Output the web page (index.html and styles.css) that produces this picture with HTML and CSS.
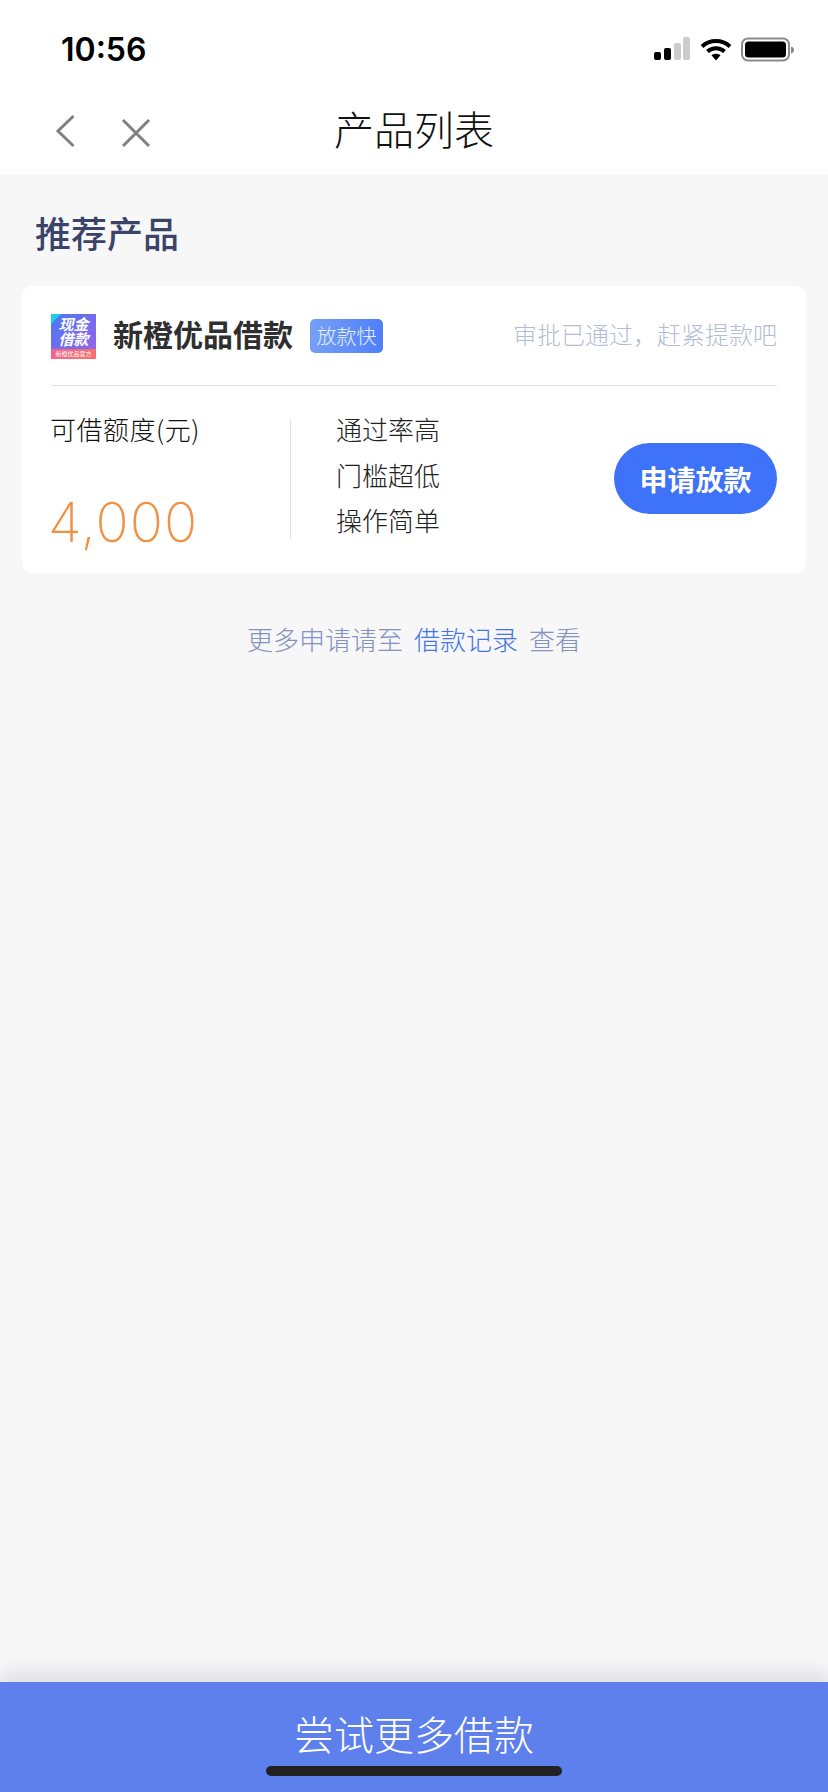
FILE: index.html
```html
<!DOCTYPE html>
<html lang="zh-CN">
<head>
<meta charset="utf-8">
<title>产品列表</title>
<link rel="stylesheet" href="styles.css">
</head>
<body>
<div class="app">
  <header class="top">
    <div class="status">
      <span class="time">10:56</span>
      <div class="status-icons">
        <svg class="signal" width="37" height="24" viewBox="0 0 37 24"><rect x="1" y="15" width="7" height="8" rx="2" fill="#000"/><rect x="11" y="11" width="7" height="12" rx="2" fill="#000"/><rect x="21" y="6" width="7" height="17" rx="2" fill="#ccc"/><rect x="30" y="0" width="7" height="23" rx="2" fill="#ccc"/></svg>
        <svg class="wifi" width="32" height="24" viewBox="0 0 32 24"><path d="M2 8.500C10 1.200 22 1.200 30 8.500M7.500 13.500C12.500 9.200 19.500 9.200 24.500 13.500" fill="none" stroke="#000" stroke-width="4"/><path d="M11.500 17.200C14.200 15.200 17.800 15.200 20.500 17.200L16 22.500Z" fill="#000"/></svg>
        <svg class="battery" width="54" height="26" viewBox="0 0 54 26"><rect x="1" y="1.500" width="47" height="22" rx="6" fill="none" stroke="#8a8a8a" stroke-width="2"/><rect x="4" y="4.500" width="41" height="16" rx="3.500" fill="#000"/><path d="M50 9.500C52 10 53 11 53 13C53 15 52 16 50 16.500Z" fill="#8a8a8a"/></svg>
      </div>
    </div>
    <nav class="nav">
      <svg class="nav-icon back" width="24" height="36" viewBox="0 0 24 36"><path d="M19.500 3L4 18L19.500 33" fill="none" stroke="#808080" stroke-width="3"/></svg>
      <svg class="nav-icon close" width="30" height="30" viewBox="0 0 30 30"><path d="M2 2L28 28M28 2L2 28" fill="none" stroke="#808080" stroke-width="3"/></svg>
      <h1 class="nav-title">产品列表</h1>
    </nav>
  </header>

  <main class="content">
    <h2 class="section-title">推荐产品</h2>
    <section class="card">
      <div class="card-head">
        <div class="logo">
          <span class="logo-badge"></span>
          <span class="logo-text">现金<br>借款</span>
          <span class="logo-foot">新橙优品官方</span>
        </div>
        <span class="product-name">新橙优品借款</span>
        <span class="tag">放款快</span>
        <span class="approved">审批已通过，赶紧提款吧</span>
      </div>
      <div class="card-body">
        <div class="quota">
          <div class="quota-label">可借额度(元)</div>
          <div class="quota-value">4,000</div>
        </div>
        <ul class="features">
          <li>通过率高</li>
          <li>门槛超低</li>
          <li>操作简单</li>
        </ul>
        <button class="apply">申请放款</button>
      </div>
    </section>
    <p class="more"><span>更多申请请至</span><a class="more-link">借款记录</a><span>查看</span></p>
  </main>

  <footer class="footer">
    <span class="footer-text">尝试更多借款</span>
    <span class="home-bar"></span>
  </footer>
</div>
</body>
</html>
```
FILE: styles.css
```css
* { box-sizing: border-box; margin: 0; padding: 0; }
html, body { width: 828px; height: 1792px; overflow: hidden; }
body { font-family: "Noto Sans CJK SC", "Liberation Sans", sans-serif; background: #f7f7f8; color: #222; }
.app { display: flex; flex-direction: column; height: 1792px; }

.top { background: #fff; height: 174px; flex: none; }
.status { height: 88px; display: flex; align-items: center; justify-content: space-between; padding: 0 33px 0 61px; }
.time { font-family: Inter, "Liberation Sans", sans-serif; font-size: 32px; font-weight: 600; color: #000; line-height: 1; padding-top: 11px; }
.status-icons { display: flex; align-items: center; gap: 9px; padding-top: 11px; }
.signal { margin-top: -1px; margin-right: 1px; }

.nav { height: 86px; display: flex; align-items: center; position: relative; padding-left: 54px; }
.nav-icon { flex: none; }
.close { margin-left: 43px; margin-top: 3px; }
.back { margin-top: 0; }
.nav-title { position: absolute; left: 0; right: 0; top: 13px; text-align: center; font-size: 40px; font-weight: 300; line-height: 54px; color: #111; }

.content { flex: 1; padding: 0 22px; }
.section-title { font-size: 36px; font-weight: 500; color: #3a4468; line-height: 50px; padding: 33px 0 0 13px; margin-bottom: 29px; }

.card { background: #fff; border-radius: 10px; height: 287px; padding: 0 29px; }
.card-head { display: flex; align-items: center; height: 100px; border-bottom: 1px solid #dde3e8; }
.logo { width: 45px; height: 45px; flex: none; position: relative; overflow: hidden; margin-top: 1px; background: linear-gradient(135deg, #4a78f5, #9a62e6); display: flex; flex-direction: column; align-items: center; }
.logo-badge { position: absolute; left: -7px; top: -7px; width: 14px; height: 14px; background: #1bd0e0; transform: rotate(45deg); }
.logo-text { font-size: 15px; font-style: italic; font-weight: 700; line-height: 15px; color: #fff; margin-top: 2px; text-align: center; }
.logo-foot { position: absolute; left: 0; right: 0; bottom: 0; height: 10px; background: linear-gradient(90deg, #f7608e, #f8706e); color: #ffe; font-size: 6px; line-height: 10px; text-align: center; white-space: nowrap; overflow: hidden; }
.product-name { font-size: 30px; font-weight: 700; color: #2f2f2f; line-height: 40px; margin-left: 17px; margin-top: -5px; }
.tag { margin-left: 17px; width: 73px; height: 34px; border-radius: 5px; background: linear-gradient(90deg, #76a0f7, #4e7ffa); color: #e6eeff; font-size: 20px; font-weight: 300; line-height: 34px; text-align: center; }
.approved { margin-left: auto; font-size: 24px; font-weight: 300; color: #b2bdd3; line-height: 34px; margin-top: -3px; }

.card-body { display: flex; align-items: flex-start; position: relative; height: 186px; padding-top: 33px; }
.quota { width: 240px; flex: none; height: 120px; border-right: 1px solid #dfe3e8; position: relative; }
.quota-label { font-size: 26px; font-weight: 300; line-height: 30px; color: #111; margin-top: -5px; margin-left: -1px; letter-spacing: .5px; }
.quota-value { font-family: Inter, "Liberation Sans", sans-serif; font-size: 55px; font-weight: 200; line-height: 60px; color: #f09245; margin-top: 48px; margin-left: -3px; letter-spacing: 1px; }
.features { list-style: none; margin-left: 45px; margin-top: -13px; }
.features li { font-size: 26px; font-weight: 300; line-height: 45.500px; color: #222; }
.apply { position: absolute; right: 0; top: 57px; width: 163px; height: 71px; border: 0; border-radius: 35.500px; background: #3e72f8; color: #fff; font-family: inherit; font-size: 28px; font-weight: 700; }

.more { display: flex; justify-content: center; gap: 11px; font-size: 26px; font-weight: 300; color: #8492c0; line-height: 36px; margin-top: 48px; }
.more-link { color: #4474e6; }

.footer { flex: none; height: 110px; background: #5e80ec; box-shadow: 0 -10px 16px rgba(120,122,135,.18); position: relative; display: flex; justify-content: center; color: #fff; }
.footer-text { font-size: 40px; font-weight: 300; line-height: 56px; margin-top: 23px; }
.home-bar { position: absolute; left: 266px; bottom: 16px; width: 296px; height: 10px; border-radius: 5px; background: #222; }
```
